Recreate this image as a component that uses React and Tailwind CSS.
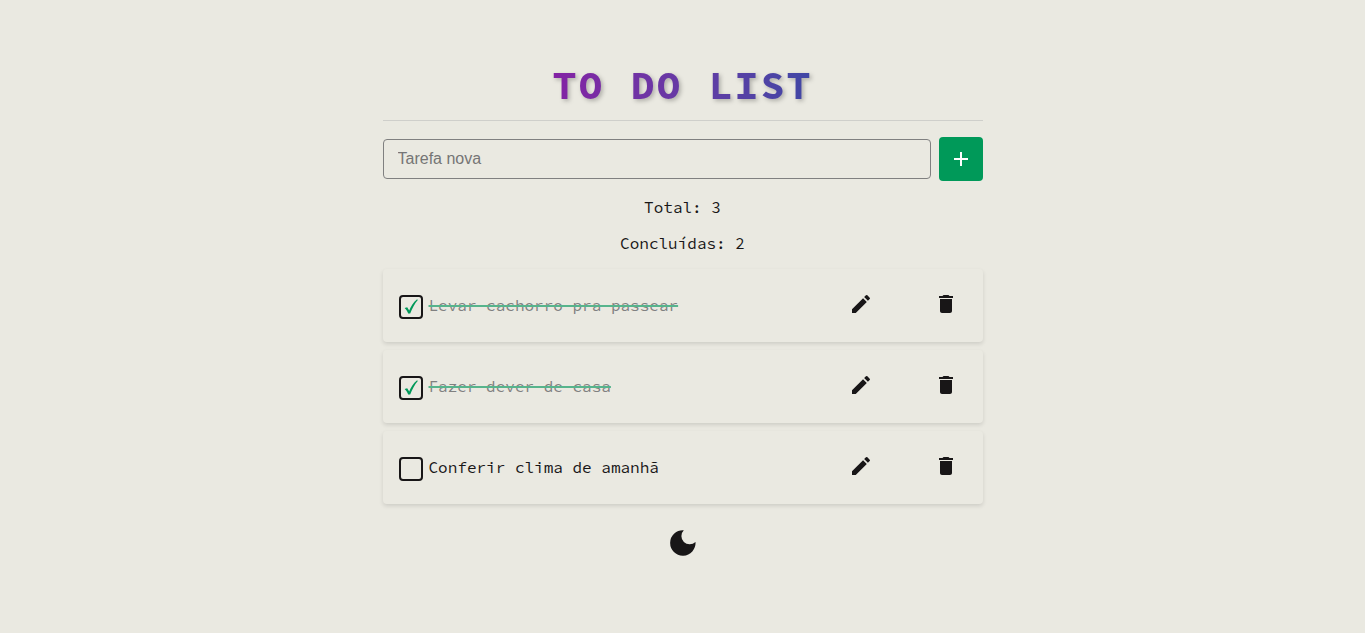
import { useState } from "react";
import { MdAdd, MdDelete, MdEdit } from "react-icons/md";

const initialTasks = [
  { id: 1, name: "Levar cachorro pra passear", done: true },
  { id: 2, name: "Fazer dever de casa", done: true },
  { id: 3, name: "Conferir clima de amanhã", done: false },
];

function MoonIcon() {
  return (
    <svg viewBox="0 0 26 26" className="size-[26px] fill-current" aria-hidden="true">
      <path d="M13.8 .3A8.200 8.200 0 0 0 25.500 11.900A12.700 12.700 0 1 1 13.800 .3z" />
    </svg>
  );
}

function TaskCard({ task, onToggle, onDelete }) {
  return (
    <li className="flex items-center rounded bg-[#eae9e1] px-4 pt-[22px] pb-[23px] shadow-[0_2px_4px_rgba(0,0,0,0.12)]">
      <label className="flex h-7 grow cursor-pointer items-center gap-1.5">
        <span className="relative mt-1 size-6 shrink-0">
          <input
            type="checkbox"
            checked={task.done}
            onChange={onToggle}
            className="block size-6 appearance-none rounded border-2 border-[#181617]"
          />
          {task.done && (
            <svg viewBox="0 0 24 24" className="pointer-events-none absolute inset-0 size-6 fill-[#009959]" aria-hidden="true">
              <path d="M5.600 13 8.200 12.200 10.200 15.400C11.800 11.600 14.400 7.200 17.800 4.600L19 4.800C15.600 8.800 13.200 13.200 11.200 18.600H9.200C8.400 16.600 7.200 14.400 5.600 13z" />
            </svg>
          )}
        </span>
        {task.done ? (
          <span className="text-[#808080] line-through decoration-[#57b48c] decoration-2">{task.name}</span>
        ) : (
          <span>{task.name}</span>
        )}
      </label>
      <div className="flex gap-[61px] pr-[9px] pb-0.5">
        <button type="button" aria-label="Editar">
          <MdEdit className="size-6" />
        </button>
        <button type="button" aria-label="Excluir" onClick={onDelete}>
          <MdDelete className="size-6" />
        </button>
      </div>
    </li>
  );
}

export default function App() {
  const [tasks, setTasks] = useState(initialTasks);
  const [name, setName] = useState("");

  const addTask = (event) => {
    event.preventDefault();
    if (!name.trim()) return;
    setTasks([...tasks, { id: Date.now(), name, done: false }]);
    setName("");
  };
  const toggle = (id) => setTasks(tasks.map((t) => (t.id === id ? { ...t, done: !t.done } : t)));
  const remove = (id) => setTasks(tasks.filter((t) => t.id !== id));

  return (
    <div className="min-h-screen bg-[#eae9e1] px-4 pt-14 pb-16 font-['Source_Code_Pro','Liberation_Mono',monospace] text-base text-[#181617]">
      <main className="mx-auto flex max-w-[600px] flex-col">
        <header className="flex justify-center border-b border-[#cfcfcb] pb-1.5">
          <h1 className="bg-linear-to-r from-[#8321a4] to-[#3f47a5] bg-clip-text text-[40px] leading-[58px] font-bold tracking-wider text-transparent drop-shadow-[2px_2px_2px_rgba(0,0,0,0.25)]">
            TO DO LIST
          </h1>
        </header>
        <form onSubmit={addTask} className="mt-4 flex items-center gap-2">
          <input
            type="text"
            aria-label="Tarefa nova"
            placeholder="Tarefa nova"
            value={name}
            onChange={(e) => setName(e.target.value)}
            className="h-10 min-w-0 grow rounded border border-[#808080] px-3.5 font-['Liberation_Sans',sans-serif] placeholder:text-[#757575]"
          />
          <button type="submit" aria-label="Adicionar" className="flex size-11 items-center justify-center rounded bg-[#009959] text-white">
            <MdAdd className="size-6" />
          </button>
        </form>
        <div className="mt-4 flex flex-col gap-4 text-center leading-5">
          <p>Total: {tasks.length}</p>
          <p>Concluídas: {tasks.filter((t) => t.done).length}</p>
        </div>
        <ul className="mt-4 flex flex-col gap-2">
          {tasks.map((task) => (
            <TaskCard key={task.id} task={task} onToggle={() => toggle(task.id)} onDelete={() => remove(task.id)} />
          ))}
        </ul>
        <button type="button" aria-label="Modo escuro" className="mt-[26px] self-center">
          <MoonIcon />
        </button>
      </main>
    </div>
  );
}
